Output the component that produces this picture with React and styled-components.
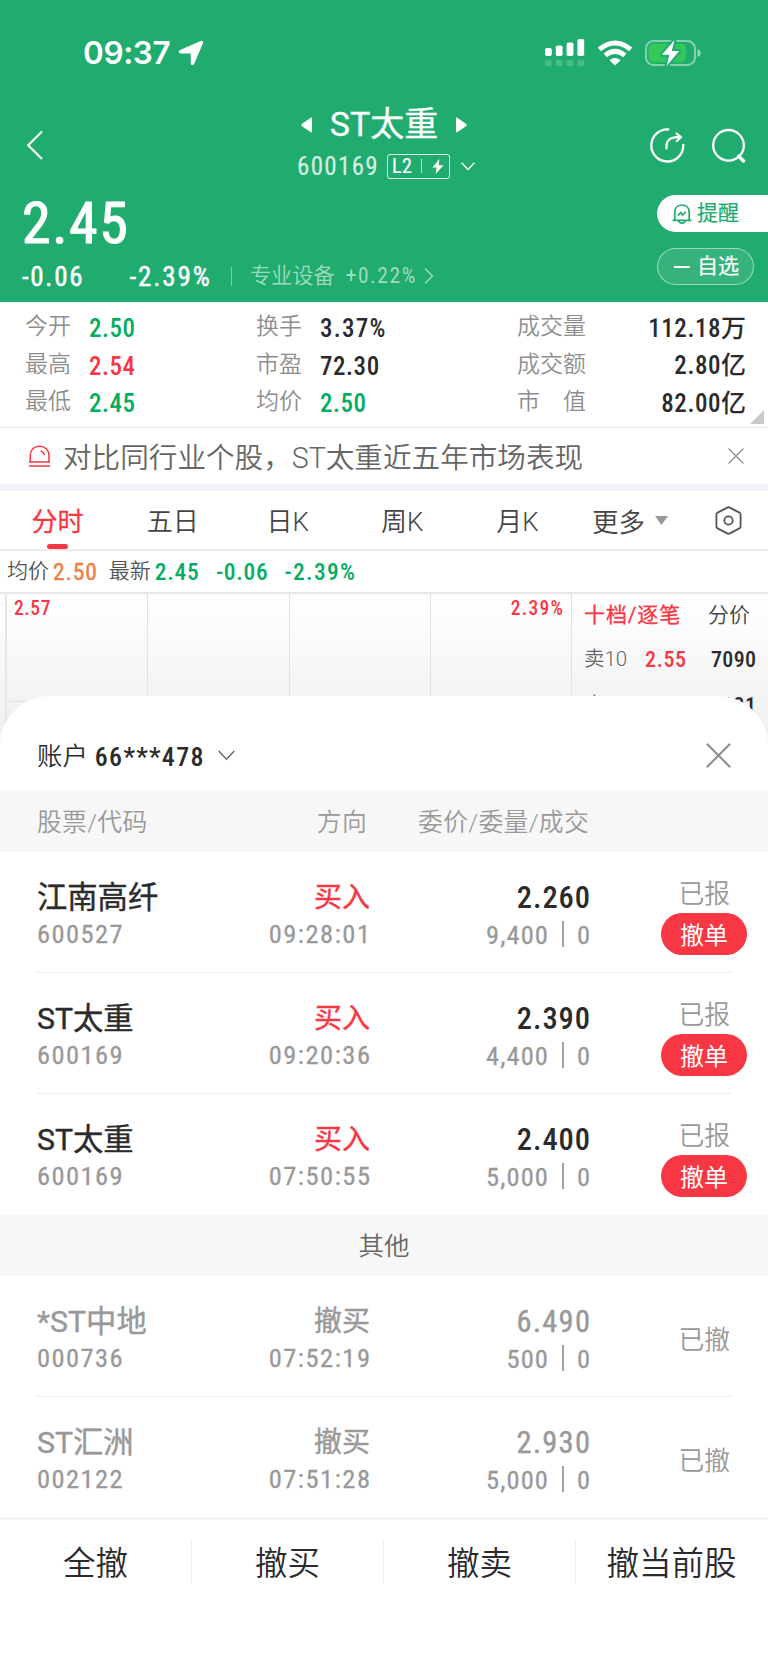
import React from 'react';
import styled, { createGlobalStyle } from 'styled-components';

const GREEN = '#20ab6f';
const UP = '#f83744';
const DOWN = '#05ad62';

const colors = { up: UP, down: DOWN, dark: '#2b2b2d', orange: '#ee7d45', gray: '#999' };

const GlobalStyle = createGlobalStyle`
  * {
    box-sizing: border-box;
  }
  body {
    margin: 0;
    background: #fff;
    font-family: Roboto, "Noto Sans CJK SC", sans-serif;
    font-weight: 350;
    white-space: nowrap;
  }
  svg {
    display: block;
    flex: none;
  }
`;

const Screen = styled.div`
  width: 768px;
  height: 1665px;
  overflow: hidden;
  background: #fff;
`;

const Num = styled.span`
  font-family: "Roboto Condensed", "Noto Sans CJK SC", sans-serif;
  font-size: ${({ $size }) => $size || 26}px;
  font-weight: ${({ $weight }) => $weight || 500};
  letter-spacing: ${({ $ls }) => $ls || 0.03}em;
  margin-right: -${({ $ls }) => $ls || 0.03}em;
  color: ${({ $color }) => colors[$color] || 'inherit'};
  -webkit-text-stroke: ${({ $stroke }) => $stroke || 0}px currentColor;
`;

/* ---------- header ---------- */

const Header = styled.header`
  height: 302px;
  background: ${GREEN};
  color: #fff;
`;

const StatusBar = styled.div`
  display: flex;
  align-items: center;
  justify-content: space-between;
  height: 103px;
  padding: 2px 67px 0 83px;
`;

const StatusGroup = styled.div`
  display: flex;
  align-items: center;
  gap: ${({ $gap }) => $gap}px;
`;

const Clock = styled.span`
  font-family: Inter, sans-serif;
  font-size: 31.5px;
  font-weight: 600;
  letter-spacing: -0.4px;
`;

const NavBar = styled.div`
  display: grid;
  grid-template-columns: 200px 1fr 200px;
  align-items: center;
  height: 84px;
`;

const NavLeft = styled.div`
  padding-left: 26px;
`;

const NavRight = styled.div`
  display: flex;
  justify-content: flex-end;
  gap: 26px;
  padding-right: 22px;
`;

const NavCenter = styled.div`
  display: flex;
  flex-direction: column;
  align-items: center;
`;

const TitleRow = styled.div`
  display: flex;
  align-items: center;
  gap: 18px;
  height: 42px;
  font-size: 34px;
  font-weight: 400;
  line-height: 42px;
  -webkit-text-stroke: 0.3px #fff;

  span {
    padding-bottom: 1px;
  }
`;

const CodeRow = styled.div`
  display: flex;
  align-items: center;
  height: 41px;
  padding-left: 4px;
`;

const CodeText = styled(Num)`
  color: rgba(255, 255, 255, 0.8);
  margin-right: 8px;
`;

const LevelTag = styled.span`
  display: flex;
  align-items: center;
  width: 63px;
  height: 25px;
  margin-right: 11px;
  padding: 0 4px;
  border: 1px solid rgba(255, 255, 255, 0.85);
  border-radius: 3px;
`;

const TagLine = styled.i`
  width: 1px;
  height: 14px;
  margin: 0 10px 0 9px;
  background: rgba(255, 255, 255, 0.7);
`;

const Quote = styled.div`
  display: flex;
  justify-content: space-between;
  height: 115px;
`;

const QuoteMain = styled.div`
  padding: 6px 0 0 22px;
`;

const Price = styled.div`
  height: 60px;
  line-height: 60px;
`;

const ChangeRow = styled.div`
  display: flex;
  align-items: center;
  height: 47px;
`;

const Percent = styled(Num)`
  margin-left: 47px;
`;

const Divider = styled.i`
  width: 1px;
  height: 19px;
  margin: 0 18px 0 21px;
  background: rgba(255, 255, 255, 0.4);
`;

const Sector = styled.div`
  display: flex;
  align-items: center;
  color: rgba(255, 255, 255, 0.58);
  font-size: 21.2px;
  line-height: 30px;
  padding-bottom: 2px;

  span + span {
    margin: 0 7px 0 11px;
  }
`;

const QuoteActions = styled.div`
  width: 111px;
  padding-top: 8px;
`;

const Pill = styled.button`
  display: flex;
  align-items: center;
  width: ${({ $solid }) => ($solid ? '111px' : '97px')};
  height: 37px;
  margin: 0 0 16px;
  padding: 0 0 0 ${({ $solid }) => ($solid ? 15 : 16)}px;
  gap: ${({ $solid }) => ($solid ? 5 : 7)}px;
  border: ${({ $solid }) => ($solid ? 'none' : '1px solid rgba(255, 255, 255, 0.5)')};
  border-radius: ${({ $solid }) => ($solid ? '19px 0 0 19px' : '19px')};
  background: ${({ $solid }) => ($solid ? '#fff' : 'rgba(255, 255, 255, 0.1)')};
  color: ${({ $solid }) => ($solid ? GREEN : '#fff')};
  font-family: inherit;
  font-size: 21px;
  font-weight: 400;
  line-height: 35px;
  -webkit-text-stroke: 0.2px currentColor;
`;

const Minus = styled.i`
  width: 16px;
  height: 2px;
  background: #fff;
`;

/* ---------- stats ---------- */

const Stats = styled.section`
  display: flex;
  height: 126px;
  padding: 6px 0 0 25px;
  border-bottom: 1px solid #e9e9e9;
  position: relative;
`;

const StatColumn = styled.div`
  width: ${({ $width }) => $width}px;
`;

const Stat = styled.div`
  display: flex;
  align-items: center;
  justify-content: ${({ $spread }) => ($spread ? 'space-between' : 'flex-start')};
  gap: 18px;
  height: 37.5px;
  line-height: 33px;
`;

const StatLabel = styled.span`
  font-size: 23px;
  color: #8e8e8e;
`;

const StatValue = styled(Num)`
  padding-top: ${({ $cjk }) => ($cjk ? 3 : 4)}px;
`;

const Corner = styled.i`
  position: absolute;
  right: 4px;
  bottom: 3px;
  border-left: 14px solid transparent;
  border-bottom: 14px solid #c9c9c9;
`;

/* ---------- promo, tabs, chart ---------- */

const Promo = styled.div`
  display: flex;
  align-items: center;
  height: 63px;
  padding: 0 24px 0 28px;
  border-bottom: 7px solid #f2f3f8;
  font-size: 28.6px;
  color: #666;
`;

const PromoText = styled.span`
  flex: 1;
  margin-left: 12px;
  padding-bottom: 1px;
`;

const Tabs = styled.nav`
  display: grid;
  grid-template-columns: 115px 115.5px 114.5px 114.5px 116px 109px 1fr;
  height: 60px;
  border-bottom: 2px solid #ebebeb;
`;

const Tab = styled.div`
  display: flex;
  flex-direction: column;
  align-items: center;
  justify-content: space-between;
  padding-top: 11px;
  line-height: 40px;
  font-size: 26px;
  color: ${({ $active }) => ($active ? UP : '#444')};
  font-weight: ${({ $active }) => ($active ? 400 : 350)};
  -webkit-text-stroke: ${({ $active }) => ($active ? '0.3px' : '0')} currentColor;

  &::after {
    content: '';
    width: 21px;
    height: 5px;
    border-radius: 3px;
    background: ${({ $active }) => ($active ? UP : 'transparent')};
  }
`;

const MoreTab = styled.div`
  display: flex;
  align-items: center;
  justify-content: center;
  gap: 10px;
  font-size: 26.5px;
  color: #444;
`;

const GearTab = styled.div`
  display: flex;
  align-items: center;
  padding-left: 30px;
`;

const InfoLine = styled.div`
  display: flex;
  align-items: center;
  height: 41px;
  padding-left: 7px;
  font-size: 21px;
  line-height: 30px;
  color: #555;
`;

const InfoLabel = styled.b`
  font-weight: 350;
  padding-bottom: 1px;
  margin-right: 4px;
`;

const InfoNum = styled(Num)`
  && {
    padding-top: 1px;
    margin-right: ${({ $gap }) => $gap}px;
  }
`;

const ChartArea = styled.section`
  display: flex;
  height: 180px;
  padding-left: 5px;
  border-top: 2px solid #e6e6e6;
  background: linear-gradient(#fff 0, #fafafa 50px, #f3f3f3 105px, #efefef 100%);
`;

const ChartGrid = styled.div`
  display: grid;
  grid-template-columns: repeat(4, 1fr);
  grid-template-rows: 108px 1fr;
  width: 567px;
  border-left: 2px solid #e6e6e6;
`;

const ChartCell = styled.div`
  display: flex;
  justify-content: ${({ $right }) => ($right ? 'flex-end' : 'flex-start')};
  padding: 4px 8px 4px 7px;
  line-height: 22px;
  border-right: 1px solid #e2e2e2;
  border-bottom: 1px solid #e2e2e2;
`;

const OrderBook = styled.div`
  flex: 1;
  padding-left: 12px;
`;

const BookTabs = styled.div`
  display: flex;
  align-items: center;
  justify-content: space-between;
  height: 37px;
  padding-right: 18px;
  margin-bottom: 6px;
  font-size: 21px;
  color: #444;
`;

const BookTabActive = styled.span`
  font-weight: 400;
  letter-spacing: 0.9px;
  color: ${UP};
  -webkit-text-stroke: 0.3px ${UP};
`;

const BookRow = styled.div`
  display: grid;
  grid-template-columns: 61px 52px 1fr;
  align-items: center;
  height: 46px;
  padding-right: 12px;
  font-size: 20.5px;
  line-height: 30px;
  color: #666;

  & > :first-child {
    padding-bottom: 2px;
  }

  & > :last-child {
    justify-self: end;
  }
`;

/* ---------- order sheet ---------- */

const Sheet = styled.section`
  position: relative;
  height: 970px;
  margin-top: -76px;
  border-radius: 50px 50px 0 0;
  background: #fff;
`;

const SheetHead = styled.div`
  display: flex;
  align-items: center;
  height: 94px;
  padding: 25px 37px 0 37px;
  font-size: 25.4px;
  line-height: 36px;
  color: #2b2b2d;
`;

const Account = styled.div`
  display: flex;
  flex: 1;
  align-items: center;
  gap: 7px;
`;

const AccountNumber = styled(Num)`
  padding-top: 2px;
`;

const AccountChevron = styled.div`
  margin-left: 8px;
`;

const TableHead = styled.div`
  display: grid;
  grid-template-columns: 270px 60px 1fr 140px;
  align-items: center;
  height: 62px;
  padding: 0 39px 3px 37px;
  background: #f7f7f7;
  font-size: 24.8px;
  letter-spacing: 0.3px;
  color: #999;
`;

const HeadCell = styled.span`
  justify-self: ${({ $right }) => ($right ? 'end' : 'start')};
`;

const Row = styled.div`
  display: grid;
  grid-template-columns: 170px 163px 220px 1fr;
  height: 121px;
  margin: 0 37px;
  border-bottom: 1px solid ${({ $last }) => ($last ? 'transparent' : '#ededed')};
  color: ${({ $muted }) => ($muted ? '#999' : '#2b2b2d')};
`;

const Cell = styled.div`
  display: flex;
  flex-direction: column;
  align-items: ${({ $right }) => ($right ? 'flex-end' : 'flex-start')};
  padding-top: 27px;
`;

const StockName = styled.span`
  height: 37px;
  line-height: 38px;
  font-size: 30.3px;
  font-weight: 400;
  -webkit-text-stroke: 0.4px currentColor;
`;

const Side = styled(StockName)`
  font-size: 28px;
  color: ${({ $muted }) => ($muted ? '#999' : UP)};
`;

const OrderPrice = styled(Num)`
  height: 37px;
  line-height: 38px;
`;

const Sub = styled(Num)`
  height: 37px;
  line-height: 36px;
  color: #999;
`;

const Qty = styled.div`
  display: flex;
  align-items: center;
  height: 36px;
  color: #999;
`;

const QtyLine = styled.i`
  width: 2px;
  height: 26px;
  margin: 0 13px 0 14px;
  background: #a3a3a3;
`;

const Status = styled.div`
  display: flex;
  flex-direction: column;
  align-items: flex-end;
  justify-content: ${({ $center }) => ($center ? 'center' : 'flex-start')};
  padding-top: ${({ $center }) => ($center ? 7 : 24)}px;
  padding-right: 1px;
  font-size: 25.8px;
  line-height: 36px;
  color: #999;
`;

const CancelButton = styled.button`
  width: 86px;
  height: 42px;
  margin: 1px -17px 0 0;
  padding: 0 0 2px;
  border: none;
  border-radius: 21px;
  background: ${UP};
  color: #fff;
  font-family: inherit;
  font-size: 24px;
  font-weight: 400;
`;

const SectionTitle = styled.div`
  height: 61px;
  line-height: 62px;
  background: #f7f7f7;
  text-align: center;
  font-size: 25.5px;
  color: #666;
`;

const ActionBar = styled.div`
  display: grid;
  grid-template-columns: repeat(4, 1fr);
  height: 147px;
  padding-top: 21px;
  border-top: 1px solid #ebebeb;
`;

const Action = styled.div`
  height: 44px;
  line-height: 48px;
  text-align: center;
  font-size: 32.5px;
  color: #2b2b2d;
  border-right: 1px solid #ededed;

  &:last-child {
    border-color: transparent;
  }
`;

/* ---------- icons ---------- */

const LocationIcon = () => (
  <svg width="26" height="26" viewBox="0 0 26 26" fill="#fff">
    <path d="M22.8 1 C24.6.2 25.8 1.5 25 3.3 L16.2 23.8 C15.4 25.8 12.8 25.3 12.8 23.2 L12.7 13.6 L2.8 13.4 C.6 13.4 .1 10.8 2 10 Z" />
  </svg>
);

const SignalIcon = () => (
  <svg width="40" height="28" viewBox="0 0 40 28" fill="#fff">
    {[8, 10.5, 13.5, 17].map((h, i) => (
      <React.Fragment key={h}>
        <rect x={i * 10.8} y={17 - h} width="6.8" height={h} rx="1.8" />
        <rect x={i * 10.8} y="21" width="6.8" height="6.3" rx="1.8" opacity="0.2" />
      </React.Fragment>
    ))}
  </svg>
);

const WifiIcon = () => (
  <svg width="36" height="26" viewBox="0 0 36 26" fill="none" stroke="#fff" strokeWidth="5">
    <path d="M2.3 9.4 Q18 -3.4 33.7 9.4" />
    <path d="M8.2 15.4 Q18 7.3 27.8 15.4" />
    <path d="M12.4 20.2 Q18 15.6 23.6 20.2 L18 25.6 Z" fill="#fff" stroke="none" />
  </svg>
);

const BatteryIcon = () => (
  <svg width="56" height="28" viewBox="0 0 56 28">
    <rect x="1" y="2" width="49" height="24" rx="7.5" fill="none" stroke="#fff" strokeOpacity="0.45" strokeWidth="2" />
    <path d="M52.5 10 q3.2 1.2 3.2 4 t-3.2 4z" fill="#fff" opacity="0.5" />
    <rect x="3.5" y="4.8" width="37.5" height="18.4" rx="5" fill="#34c759" />
    <path d="M29.5 1 L16.8 15.8 H24.3 L21.5 27 L34.3 12 H26.8 Z" fill="#fff" stroke={GREEN} strokeWidth="4" paintOrder="stroke" strokeLinejoin="round" />
  </svg>
);

const BackIcon = () => (
  <svg width="17" height="30" viewBox="0 0 17 30" fill="none" stroke="#fff" strokeWidth="2.2">
    <path d="M16 1.5 L2.2 15.2 L16 29" />
  </svg>
);

const Triangle = ({ right }) => (
  <svg width="11" height="16" viewBox="0 0 11 16" fill="#fff">
    <path d={right ? 'M0 1.5 Q0 .2 1.2.8 L10.3 7.1 Q11 8 10.3 8.9 L1.2 15.2 Q0 15.8 0 14.5Z' : 'M11 1.5 Q11 .2 9.8.8 L.7 7.1 Q0 8 .7 8.9 L9.8 15.2 Q11 15.8 11 14.5Z'} />
  </svg>
);

const ChevronDown = ({ width = 14, color = '#fff' }) => (
  <svg width={width} height={width * 0.62} viewBox="0 0 14 8.7" fill="none" stroke={color} strokeWidth={20 / width}>
    <path d="M.6 .8 L7 7.6 L13.4 .8" />
  </svg>
);

const ChevronRight = () => (
  <svg width="10" height="16" viewBox="0 0 10 16" fill="none" stroke="#fff" strokeOpacity="0.6" strokeWidth="1.3">
    <path d="M1 .5 L8.5 8 L1 15.5" />
  </svg>
);

const BoltIcon = () => (
  <svg width="12" height="15" viewBox="0 0 12 15" fill="#fff">
    <path d="M7.4 0 L.4 8.6 H4.6 L3.6 15 L11.6 6.2 H6.8 Z" />
  </svg>
);

const ShareIcon = () => (
  <svg width="35" height="35" viewBox="0 0 35 35" fill="none" stroke="#fff" strokeWidth="2.3" strokeLinecap="round">
    <path d="M18.2 1.5 A16 16 0 1 0 33.3 17" />
    <path d="M16.5 20.3 C16 13.5 19 9.5 27.5 9.2 H30" />
    <path d="M26.6 5.6 L31 9.2 L26.8 13" strokeLinejoin="round" />
  </svg>
);

const SearchIcon = () => (
  <svg width="35" height="35" viewBox="0 0 35 35" fill="none" stroke="#fff" strokeWidth="2.3">
    <circle cx="17.5" cy="17.3" r="15.3" />
    <path d="M27.8 28.2 L32.5 33" strokeWidth="3.4" strokeLinecap="round" />
  </svg>
);

const BellIcon = () => (
  <svg width="20" height="20" viewBox="0 0 20 20" fill="none" stroke={GREEN} strokeWidth="1.7">
    <path d="M.5 16.4 H19.5 M2.8 16.2 V8 C2.8 3.6 6 1 10 1 S17.2 3.6 17.2 8 V16.2" />
    <path d="M6.6 16.6 Q7.2 19.2 10 19.2 T13.4 16.6" />
    <path d="M5.8 11.6 L8.8 8.6 L10.6 11 L13.8 7.8" />
  </svg>
);

const AlarmIcon = () => (
  <svg width="23" height="22" viewBox="0 0 23 22" fill="none" stroke={UP} strokeWidth="1.5">
    <path d="M2.2 17 V10.6 C2.2 5 6 1.2 11.5 1.2 S21 5 21 10.6 V17" />
    <path d="M1 17 H22 M1 21 H22" />
    <path d="M12.6 6 Q15.6 6.6 16.4 10" />
  </svg>
);

const CloseIcon = ({ size, width }) => (
  <svg width={size} height={size} viewBox="0 0 24 24" fill="none" stroke="#8e8e8e" strokeWidth={width}>
    <path d="M.8 .8 L23.2 23.2 M23.2 .8 L.8 23.2" />
  </svg>
);

const CaretIcon = () => (
  <svg width="13" height="9" viewBox="0 0 13 9" fill="#999">
    <path d="M0 0 H13 L6.5 9 Z" />
  </svg>
);

const HexIcon = () => (
  <svg width="27" height="29" viewBox="0 0 27 29" fill="none" stroke="#555" strokeWidth="1.8">
    <path d="M12.2 1.6 Q13.5 .9 14.8 1.6 L24.4 6.6 Q25.6 7.4 25.6 8.8 V20.2 Q25.6 21.6 24.4 22.4 L14.8 27.4 Q13.5 28.1 12.2 27.4 L2.6 22.4 Q1.4 21.6 1.4 20.2 V8.8 Q1.4 7.4 2.6 6.6 Z" />
    <circle cx="13.5" cy="14.5" r="4.2" />
  </svg>
);

/* ---------- data ---------- */

const stats = [
  { width: 231, items: [['今开', '2.50', 'down'], ['最高', '2.54', 'up'], ['最低', '2.45', 'down']] },
  { width: 261, items: [['换手', '3.37%', 'dark', 0.05], ['市盈', '72.30', 'dark'], ['均价', '2.50', 'down']] },
  { width: 229, spread: true, items: [['成交量', '112.18万', 'dark'], ['成交额', '2.80亿', 'dark'], ['市　值', '82.00亿', 'dark']] },
];

const pending = [
  { name: '江南高纤', code: '600527', side: '买入', time: '09:28:01', price: '2.260', qty: '9,400' },
  { name: 'ST太重', code: '600169', side: '买入', time: '09:20:36', price: '2.390', qty: '4,400' },
  { name: 'ST太重', code: '600169', side: '买入', time: '07:50:55', price: '2.400', qty: '5,000' },
];

const others = [
  { name: '*ST中地', code: '000736', side: '撤买', time: '07:52:19', price: '6.490', qty: '500' },
  { name: 'ST汇洲', code: '002122', side: '撤买', time: '07:51:28', price: '2.930', qty: '5,000' },
];

const OrderRow = ({ order, muted, last }) => (
  <Row $muted={muted} $last={last}>
    <Cell>
      <StockName>{order.name}</StockName>
      <Sub $size={26.5} $weight={400} $ls={0.053} $stroke={0.3}>{order.code}</Sub>
    </Cell>
    <Cell $right>
      <Side $muted={muted}>{order.side}</Side>
      <Sub $size={26.5} $weight={400} $ls={0.056} $stroke={0.3}>{order.time}</Sub>
    </Cell>
    <Cell $right>
      <OrderPrice
        $size={30.5}
        $weight={muted ? 400 : 500}
        $ls={muted ? 0.042 : 0.03}
        $stroke={muted ? 0.4 : 0}
      >
        {order.price}
      </OrderPrice>
      <Qty>
        <Num $size={26.5} $weight={400} $ls={0.04} $stroke={0.3}>{order.qty}</Num>
        <QtyLine />
        <Num $size={26.5} $weight={400} $stroke={0.3}>0</Num>
      </Qty>
    </Cell>
    <Status $center={muted}>
      {muted ? '已撤' : '已报'}
      {!muted && <CancelButton>撤单</CancelButton>}
    </Status>
  </Row>
);

const App = () => (
  <Screen>
    <GlobalStyle />
    <Header>
      <StatusBar>
        <StatusGroup $gap={8}>
          <Clock>09:37</Clock>
          <LocationIcon />
        </StatusGroup>
        <StatusGroup $gap={12}>
          <SignalIcon />
          <WifiIcon />
          <BatteryIcon />
        </StatusGroup>
      </StatusBar>
      <NavBar>
        <NavLeft><BackIcon /></NavLeft>
        <NavCenter>
          <TitleRow>
            <Triangle />
            <span>ST太重</span>
            <Triangle right />
          </TitleRow>
          <CodeRow>
            <CodeText $size={25} $weight={400} $ls={0.053} $stroke={0.2}>600169</CodeText>
            <LevelTag>
              <Num $size={20} $weight={400} $stroke={0.2}>L2</Num>
              <TagLine />
              <BoltIcon />
            </LevelTag>
            <ChevronDown />
          </CodeRow>
        </NavCenter>
        <NavRight>
          <ShareIcon />
          <SearchIcon />
        </NavRight>
      </NavBar>
      <Quote>
        <QuoteMain>
          <Price><Num $size={58} $weight={400} $ls={0.027} $stroke={1.1}>2.45</Num></Price>
          <ChangeRow>
            <Num $size={27} $weight={400} $ls={0.062} $stroke={0.5}>-0.06</Num>
            <Percent $size={27} $weight={400} $ls={0.07} $stroke={0.5}>-2.39%</Percent>
            <Divider />
            <Sector>
              <span>专业设备</span>
              <Num $size={21.5} $weight={400} $ls={0.073}>+0.22%</Num>
              <ChevronRight />
            </Sector>
          </ChangeRow>
        </QuoteMain>
        <QuoteActions>
          <Pill $solid><BellIcon />提醒</Pill>
          <Pill><Minus />自选</Pill>
        </QuoteActions>
      </Quote>
    </Header>

    <Stats>
      {stats.map(col => (
        <StatColumn key={col.width} $width={col.width}>
          {col.items.map(([label, value, color, ls]) => (
            <Stat key={label} $spread={col.spread}>
              <StatLabel>{label}</StatLabel>
              <StatValue $size={25} $ls={ls || 0.022} $color={color} $cjk={col.spread}>{value}</StatValue>
            </Stat>
          ))}
        </StatColumn>
      ))}
      <Corner />
    </Stats>

    <Promo>
      <AlarmIcon />
      <PromoText>对比同行业个股，ST太重近五年市场表现</PromoText>
      <CloseIcon size={16} width={1.8} />
    </Promo>

    <Tabs>
      <Tab $active>分时</Tab>
      <Tab>五日</Tab>
      <Tab>日K</Tab>
      <Tab>周K</Tab>
      <Tab>月K</Tab>
      <MoreTab>更多<CaretIcon /></MoreTab>
      <GearTab><HexIcon /></GearTab>
    </Tabs>

    <InfoLine>
      <InfoLabel>均价</InfoLabel>
      <InfoNum $size={23.5} $gap={11} $weight={400} $ls={0.04} $stroke={0.4} $color="orange">2.50</InfoNum>
      <InfoLabel>最新</InfoLabel>
      <InfoNum $size={23.5} $gap={16.5} $color="down">2.45</InfoNum>
      <InfoNum $size={23.5} $gap={16} $color="down">-0.06</InfoNum>
      <InfoNum $size={23.5} $gap={0} $ls={0.055} $color="down">-2.39%</InfoNum>
    </InfoLine>

    <ChartArea>
      <ChartGrid>
        <ChartCell><Num $size={19.5} $color="up">2.57</Num></ChartCell>
        <ChartCell />
        <ChartCell />
        <ChartCell $right><Num $size={19.5} $ls={0.065} $color="up">2.39%</Num></ChartCell>
        <ChartCell />
        <ChartCell />
        <ChartCell />
        <ChartCell />
      </ChartGrid>
      <OrderBook>
        <BookTabs>
          <BookTabActive>十档/逐笔</BookTabActive>
          <span>分价</span>
        </BookTabs>
        <BookRow>
          <span>卖10</span>
          <Num $size={22} $color="up">2.55</Num>
          <Num $size={22} $ls={0.015} $color="dark">7090</Num>
        </BookRow>
        <BookRow>
          <span>卖9</span>
          <Num $size={22} $color="up">2.54</Num>
          <Num $size={22} $color="dark">5021</Num>
        </BookRow>
      </OrderBook>
    </ChartArea>

    <Sheet>
      <SheetHead>
        <Account>
          <span>账户</span>
          <AccountNumber $size={26} $ls={0.05}>66***478</AccountNumber>
          <AccountChevron><ChevronDown width={17} color="#666" /></AccountChevron>
        </Account>
        <CloseIcon size={25} width={2} />
      </SheetHead>
      <TableHead>
        <HeadCell>股票/代码</HeadCell>
        <HeadCell $right>方向</HeadCell>
        <HeadCell $right>委价/委量/成交</HeadCell>
      </TableHead>
      {pending.map((order, i) => <OrderRow key={order.time} order={order} last={i === 2} />)}
      <SectionTitle>其他</SectionTitle>
      {others.map((order, i) => <OrderRow key={order.time} order={order} muted last={i === 1} />)}
      <ActionBar>
        <Action>全撤</Action>
        <Action>撤买</Action>
        <Action>撤卖</Action>
        <Action>撤当前股</Action>
      </ActionBar>
    </Sheet>
  </Screen>
);

export default App;
